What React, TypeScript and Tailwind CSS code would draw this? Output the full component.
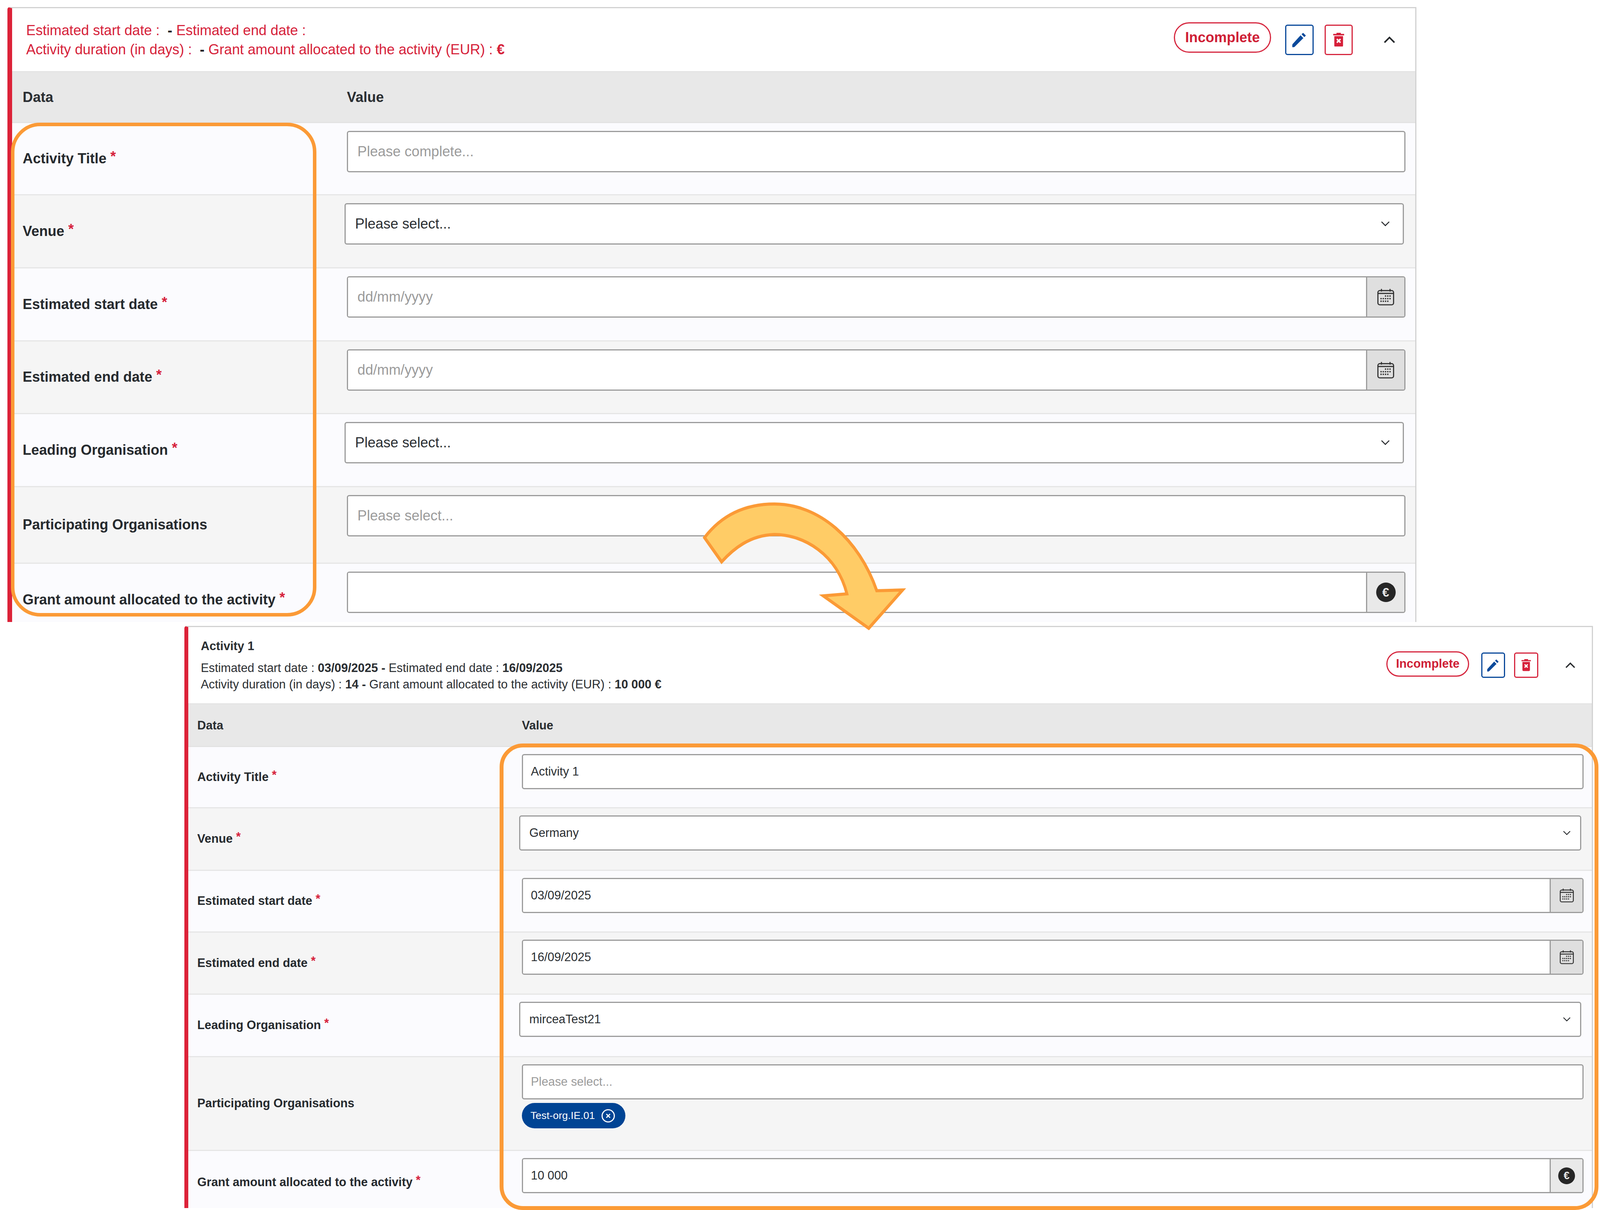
import type { ReactNode } from 'react';

// Two screenshots of the same "activity" card (empty and filled in), drawn at
// slightly different scales, with hand-drawn callouts on top of them.
// Horizontal sizes are fitted to the 4096px wide window the page really gets.

type FieldKind = 'text' | 'select' | 'date' | 'money';

interface Field {
  label: string;
  required?: boolean;
  kind: FieldKind;
  value?: string;
  placeholder?: string;
  chip?: string;
  rowClass: string;
}

const LARGE = {
  card: 'w-[3607px] h-[1574px]',
  bar: 'border-l-[12px]',
  header: 'h-[164px] pl-[36px] pr-[51px]',
  text: 'text-[36.2px]',
  badge: 'w-[249px] h-[78px] mb-[11px]',
  edit: 'w-[73px] h-[78px] ml-[36px]',
  trash: 'w-[72px] h-[78px] ml-[28px]',
  toggle: 'w-[30px] ml-[79px]',
  head: 'h-[130px] pt-[2px]',
  labelCol: 'w-[857px] pl-[27px]',
  valueCol: 'pt-[20px] pr-[25px]',
  box: 'h-[106px]',
  inputPad: 'pl-[24px] pr-[24px]',
  selectBox: 'h-[106px] -ml-[6px] mr-[4px] pl-[24px] pr-[33px]',
  addon: 'w-[98px]',
  chevronW: 23,
  toggleW: 30,
  calendarW: 43,
  pencilW: 50,
  trashW: 28,
  euro: 'w-[50px] h-[50px] text-[32px]',
};

const SMALL = {
  card: 'w-[3606px] h-[1490px]',
  bar: 'border-l-[10px]',
  header: 'h-[198px] pl-[32px] pr-[42px]',
  text: 'text-[30.8px]',
  badge: 'w-[212px] h-[65px] mb-[7px]',
  edit: 'w-[61px] h-[65px] ml-[31px]',
  trash: 'w-[62px] h-[65px] ml-[23px]',
  toggle: 'w-[26px] ml-[69px]',
  head: 'h-[109px] pt-[2px]',
  labelCol: 'w-[854px] pl-[23px]',
  valueCol: 'pt-[18px] pr-[21px]',
  box: 'h-[90px]',
  inputPad: 'pl-[20px] pr-[20px]',
  selectBox: 'h-[90px] -ml-[7px] mr-[6px] pl-[23px] pr-[24px]',
  addon: 'w-[84px]',
  chevronW: 20,
  toggleW: 26,
  calendarW: 36,
  pencilW: 42,
  trashW: 24,
  euro: 'w-[43px] h-[43px] text-[27px]',
};

type Scale = typeof LARGE;

const EMPTY_FIELDS: Field[] = [
  { label: 'Activity Title', required: true, kind: 'text', placeholder: 'Please complete...', rowClass: 'h-[185px] bg-[#fbfbfe]' },
  { label: 'Venue', required: true, kind: 'select', value: 'Please select...', rowClass: 'h-[187px] bg-[#f5f5f5]' },
  { label: 'Estimated start date', required: true, kind: 'date', placeholder: 'dd/mm/yyyy', rowClass: 'h-[187px] bg-[#fbfbfe]' },
  { label: 'Estimated end date', required: true, kind: 'date', placeholder: 'dd/mm/yyyy', rowClass: 'h-[186px] bg-[#f5f5f5]' },
  { label: 'Leading Organisation', required: true, kind: 'select', value: 'Please select...', rowClass: 'h-[187px] bg-[#fbfbfe]' },
  { label: 'Participating Organisations', kind: 'text', placeholder: 'Please select...', rowClass: 'h-[196px] bg-[#f5f5f5]' },
  { label: 'Grant amount allocated to the activity', required: true, kind: 'money', rowClass: 'h-[188px] bg-[#fbfbfe]' },
];

const FILLED_FIELDS: Field[] = [
  { label: 'Activity Title', required: true, kind: 'text', value: 'Activity 1', rowClass: 'h-[157px] bg-[#fbfbfe]' },
  { label: 'Venue', required: true, kind: 'select', value: 'Germany', rowClass: 'h-[160px] bg-[#f5f5f5]' },
  { label: 'Estimated start date', required: true, kind: 'date', value: '03/09/2025', rowClass: 'h-[158px] bg-[#fbfbfe]' },
  { label: 'Estimated end date', required: true, kind: 'date', value: '16/09/2025', rowClass: 'h-[159px] bg-[#f5f5f5]' },
  { label: 'Leading Organisation', required: true, kind: 'select', value: 'mirceaTest21', rowClass: 'h-[160px] bg-[#fbfbfe]' },
  { label: 'Participating Organisations', kind: 'text', placeholder: 'Please select...', chip: 'Test-org.IE.01', rowClass: 'h-[240px] bg-[#f5f5f5]' },
  { label: 'Grant amount allocated to the activity', required: true, kind: 'money', value: '10 000', rowClass: 'h-[164px] bg-[#fbfbfe]' },
];

function Chevron({ width, up }: { width: number; up?: boolean }) {
  return (
    <svg width={width} height={width * 0.6} viewBox="0 0 20 12" fill="none" className="shrink-0">
      <path
        d={up ? 'M1.5 10.5 10 2l8.5 8.5' : 'M1.5 1.5 10 10l8.5-8.5'}
        stroke="#26292c"
        strokeWidth={up ? 2.6 : 2.2}
      />
    </svg>
  );
}

function CalendarIcon({ width }: { width: number }) {
  const dots = [
    [22, 19], [28, 19], [34, 19],
    [10, 26], [16, 26], [22, 26], [28, 26], [34, 26],
    [10, 33], [16, 33], [22, 33], [28, 33],
  ];
  return (
    <svg width={width} height={width} viewBox="0 0 45 44" fill="none">
      <rect x="1.5" y="4.5" width="42" height="38" rx="5" stroke="#333" strokeWidth="3" />
      <path d="M2 12h41M11 0v7M34 0v7" stroke="#333" strokeWidth="3" />
      {dots.map(([cx, cy]) => (
        <circle key={`${cx}-${cy}`} cx={cx} cy={cy} r="2" fill="#333" />
      ))}
    </svg>
  );
}

function PencilIcon({ width }: { width: number }) {
  return (
    <svg width={width} height={width} viewBox="0 0 24 24" fill="#0b4a9b">
      <path d="M3 19.2V21h1.8a1.5 1.5 0 0 0 1-.4L16.6 9.8l-3.4-3.4L3.4 17.2a3 3 0 0 0-.4 2z" />
      <path d="M14.4 5.2l3.4 3.4 1.9-1.9-3.4-3.4z" />
    </svg>
  );
}

function TrashIcon({ width }: { width: number }) {
  return (
    <svg width={width} height={(width * 38) / 30} viewBox="0 0 30 38">
      <path d="M9 0h12v3h9v4H0V3h9z" fill="#d6203a" />
      <path d="M3 9h24v26a3 3 0 0 1-3 3H6a3 3 0 0 1-3-3z" fill="#d6203a" />
      <path d="M10 17l10 10M20 17L10 27" stroke="#fff" strokeWidth="4" />
    </svg>
  );
}

function CardHeader({ s, children }: { s: Scale; children: ReactNode }) {
  return (
    <header className={`flex items-center justify-between bg-white border-b-[3px] border-[#e4e4e4] ${s.header}`}>
      <div className={s.text}>{children}</div>
      <div className="flex items-center">
        <span className={`flex items-center justify-center rounded-full border-[3px] border-[#d6273f] bg-white font-bold text-[#cf1f36] ${s.badge} ${s.text}`}>
          Incomplete
        </span>
        <button type="button" aria-label="Edit" className={`flex items-center justify-center rounded-[6px] border-[3px] border-[#0b4a9b] bg-white ${s.edit}`}>
          <PencilIcon width={s.pencilW} />
        </button>
        <button type="button" aria-label="Delete" className={`flex items-center justify-center rounded-[6px] border-[3px] border-[#d6273f] bg-white ${s.trash}`}>
          <TrashIcon width={s.trashW} />
        </button>
        <div className={`flex justify-center ${s.toggle}`}>
          <Chevron width={s.toggleW} up />
        </div>
      </div>
    </header>
  );
}

function FieldControl({ field, s }: { field: Field; s: Scale }) {
  const textClass = `${s.text} text-[#2a2e32] placeholder:text-[#9b9b9b]`;

  if (field.kind === 'select') {
    return (
      <button
        type="button"
        className={`flex items-center justify-between rounded-[6px] border-[3px] border-[#9c9c9c] bg-white text-left ${s.selectBox} ${s.text} text-[#2a2e32]`}
      >
        <span>{field.value}</span>
        <Chevron width={s.chevronW} />
      </button>
    );
  }

  if (field.kind === 'date' || field.kind === 'money') {
    return (
      <div className={`flex rounded-[6px] border-[3px] border-[#9c9c9c] bg-white overflow-hidden ${s.box}`}>
        <input
          readOnly
          value={field.value ?? ''}
          placeholder={field.placeholder}
          className={`flex-1 min-w-0 bg-white outline-none ${s.inputPad} ${textClass}`}
        />
        <div className={`shrink-0 flex items-center justify-center border-l-[3px] border-[#9c9c9c] ${s.addon} ${field.kind === 'date' ? 'bg-[#dfdfdf]' : 'bg-[#e9e9e9]'}`}>
          {field.kind === 'date' ? (
            <CalendarIcon width={s.calendarW} />
          ) : (
            <span className={`flex items-center justify-center rounded-full bg-[#262626] font-bold text-[#e8e8e8] ${s.euro}`}>€</span>
          )}
        </div>
      </div>
    );
  }

  return (
    <>
      <input
        readOnly
        value={field.value ?? ''}
        placeholder={field.placeholder}
        className={`block w-full rounded-[6px] border-[3px] border-[#9c9c9c] bg-white outline-none ${s.box} ${s.inputPad} ${textClass}`}
      />
      {field.chip && (
        <span className="mt-[9px] flex items-center w-[265px] h-[65px] rounded-full bg-[#004494] pl-[22px] text-[26.5px] text-white">
          {field.chip}
          <svg width="36" height="36" viewBox="0 0 38 38" fill="none" className="ml-[16px]">
            <circle cx="19" cy="19" r="16.5" stroke="#fff" strokeWidth="3" />
            <path d="M14 14l10 10M24 14L14 24" stroke="#fff" strokeWidth="3" />
          </svg>
        </span>
      )}
    </>
  );
}

function ActivityCard({ s, fields, header }: { s: Scale; fields: Field[]; header: ReactNode }) {
  return (
    <section className={`shrink-0 overflow-hidden border-t-[3px] border-r-[3px] border-[#d2d2d2] border-l-[#dc2238] rounded-tl-[6px] bg-white ${s.bar} ${s.card}`}>
      <CardHeader s={s}>{header}</CardHeader>
      <div className={`flex items-center bg-[#e8e8e8] border-b-[3px] border-[#e2e2e2] font-bold text-[#2a2e32] ${s.head} ${s.text}`}>
        <div className={`shrink-0 ${s.labelCol}`}>Data</div>
        <div>Value</div>
      </div>
      {fields.map(field => (
        <div key={field.label} className={`flex border-b-[3px] border-[#e6e6e6] ${field.rowClass}`}>
          <div className={`shrink-0 flex items-center font-bold text-[#262a2e] ${s.labelCol} ${s.text}`}>
            <span>
              {field.label}
              {field.required && <span className="relative -top-[5px] text-[#d6203a]"> *</span>}
            </span>
          </div>
          <div className={`flex-1 min-w-0 flex flex-col ${s.valueCol}`}>
            <FieldControl field={field} s={s} />
          </div>
        </div>
      ))}
    </section>
  );
}

export default function App() {
  return (
    <div className="relative w-[4096px] h-[3097px] overflow-hidden bg-white font-['Liberation_Sans',Arial,sans-serif]">
      <div className="flex flex-col pt-[18px] pl-[19px]">
        <ActivityCard
          s={LARGE}
          fields={EMPTY_FIELDS}
          header={
            <div className="leading-[49px] text-[#d6223a]">
              <div>
                Estimated start date :&nbsp; <b className="text-[#1f2226]">-</b> Estimated end date :
              </div>
              <div>
                Activity duration (in days) :&nbsp; <b className="text-[#1f2226]">-</b> Grant amount allocated to the activity (EUR) : <b>€</b>
              </div>
            </div>
          }
        />
        <div className="ml-[453px] mt-[10px]">
          <ActivityCard
            s={SMALL}
            fields={FILLED_FIELDS}
            header={
              <div className="leading-[42px] text-[#2a2e32]">
                <div className="mb-[14px] font-bold">Activity 1</div>
                <div>
                  Estimated start date : <b>03/09/2025 -</b> Estimated end date : <b>16/09/2025</b>
                </div>
                <div>
                  Activity duration (in days) : <b>14 -</b> Grant amount allocated to the activity (EUR) : <b>10 000 €</b>
                </div>
              </div>
            }
          />
        </div>
      </div>

      {/* callouts drawn over the screenshots */}
      <div className="absolute left-[28px] top-[314px] w-[782px] h-[1264px] rounded-[75px] border-[9px] border-[#fb9a36]" />
      <div className="absolute left-[1279px] top-[1903px] w-[2813px] h-[1194px] rounded-[60px] border-[10px] border-[#fb9a36]" />
      <svg className="absolute left-[1770px] top-[1270px]" width="578" height="370" viewBox="0 0 620 370" preserveAspectRatio="none" fill="#ffcc66" stroke="#fb9a36" strokeWidth="8">
        <path d="M36 106C90 40 160 20 228 20C350 20 460 110 509 242L580 240L487 338L362 255L427 250C400 150 310 98 228 98C160 100 115 135 83 168Z" />
      </svg>
    </div>
  );
}
